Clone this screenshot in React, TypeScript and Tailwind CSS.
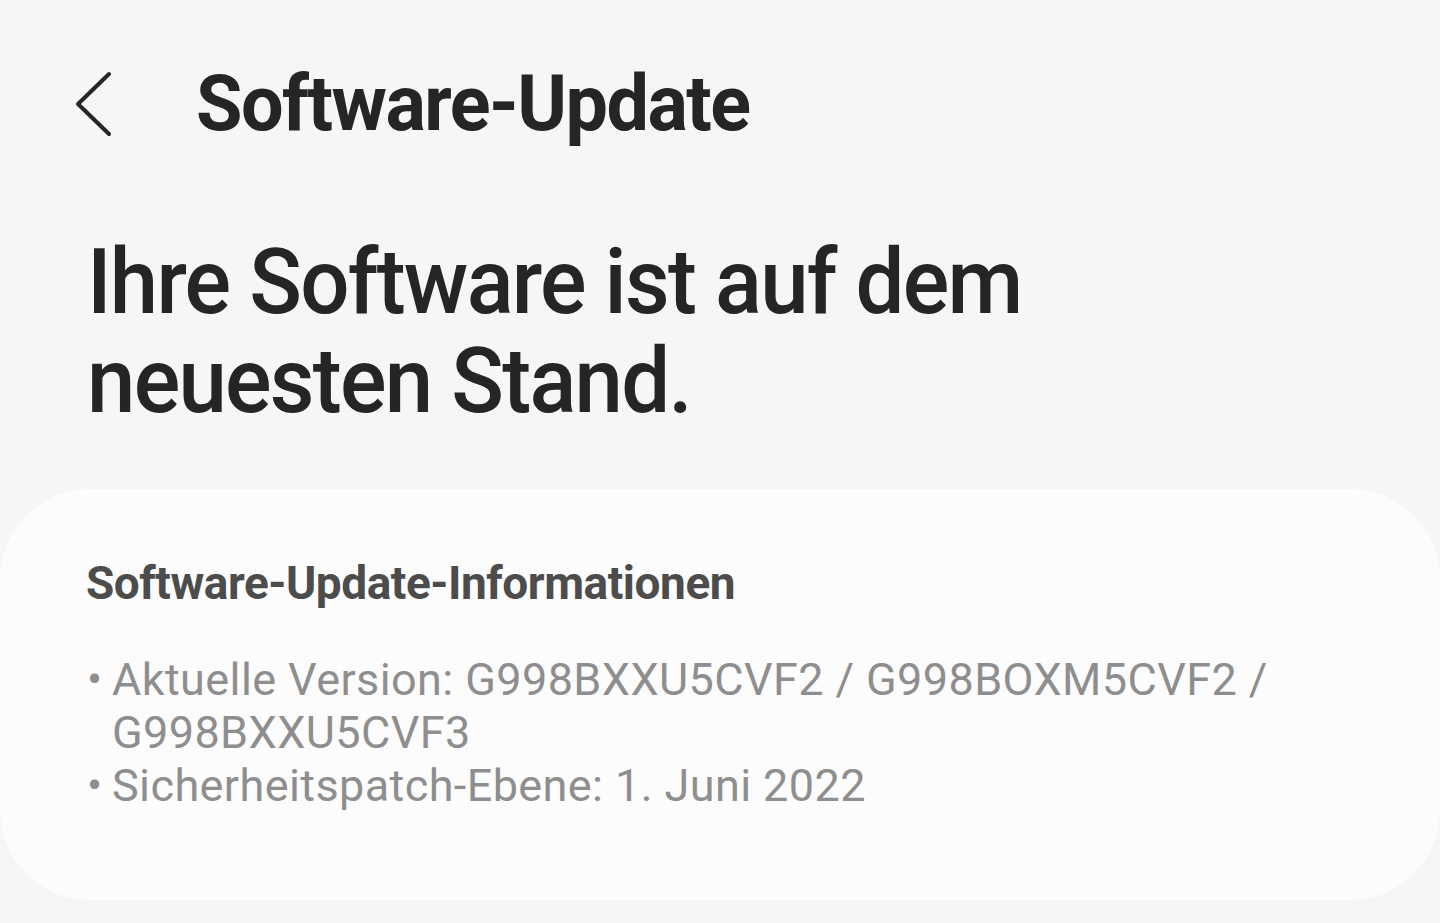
import React from "react";

const ChevronLeft = () => (
  <svg width="40" height="66" viewBox="0 0 40 66" fill="none" className="shrink-0">
    <path d="M35 3 L4 33 L35 63" stroke="#262626" strokeWidth="4" strokeLinecap="round" strokeLinejoin="round" />
  </svg>
);

export default function App() {
  const items = [
    <>
      Aktuelle Version: G998BXXU5CVF2 / G998BOXM5CVF2 /
      <br />
      G998BXXU5CVF3
    </>,
    <>Sicherheitspatch-Ebene: 1. Juni 2022</>,
  ];

  return (
    <div className="w-[1440px] h-[923px] overflow-hidden bg-[#f6f6f6] font-['Roboto',sans-serif] text-[#252525]">
      {/* Top bar */}
      <div className="flex items-center pt-[64px] pl-[74px]">
        <ChevronLeft />
        <h1 className="ml-[82px] text-[77px] leading-[80px] font-bold tracking-[-0.02em] origin-left scale-x-[0.98]">
          Software-Update
        </h1>
      </div>

      {/* Status */}
      <h2 className="mt-[89px] ml-[87px] text-[91px] leading-[99px] font-medium tracking-[-0.02em] origin-left scale-x-[0.955]">
        Ihre Software ist auf dem
        <br />
        neuesten Stand.
      </h2>

      {/* Info card */}
      <div className="mt-[58px] rounded-[90px] bg-[#fcfcfc] pt-[67px] pb-[88px] pl-[86px] pr-[60px]">
        <h3 className="text-[46px] leading-[54px] font-bold text-[#4c4c4c] tracking-[-0.01em]">
          Software-Update-Informationen
        </h3>
        <ul className="mt-[43px] text-[45px] leading-[53px] text-[#8e8e8e] tracking-[0.4px]">
          {items.map((it, i) => (
            <li key={i} className="flex">
              <span className="w-[26px] shrink-0 pl-[1px]">•</span>
              <span>{it}</span>
            </li>
          ))}
        </ul>
      </div>
    </div>
  );
}
